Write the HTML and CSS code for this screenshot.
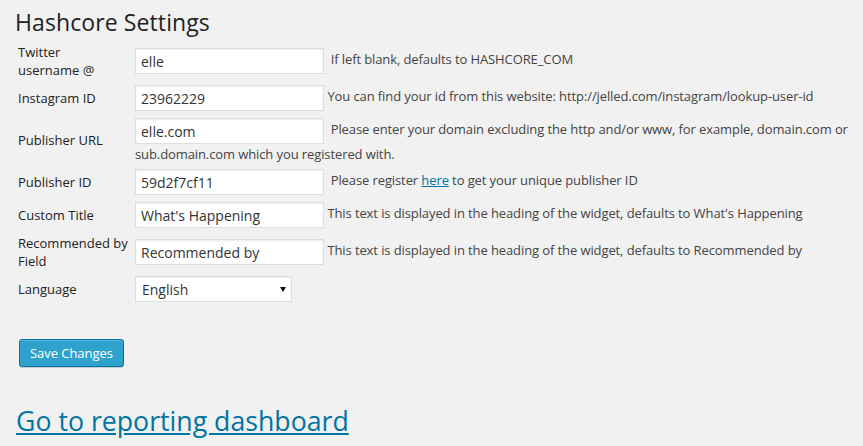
FILE: index.html
```html
<!DOCTYPE html>
<html lang="en">
<head>
<meta charset="utf-8">
<title>Hashcore Settings</title>
<link rel="stylesheet" href="styles.css">
</head>
<body>
<div class="wrap">
  <h2 class="title">Hashcore Settings</h2>
  <form class="settings">
    <div class="grid">
      <label class="lbl">Twitter username&nbsp;@</label>
      <div class="field"><input class="txt" type="text" value="elle"> <span class="desc">&nbsp;If left blank, defaults to HASHCORE_COM</span></div>

      <label class="lbl">Instagram ID</label>
      <div class="field"><input class="txt" type="text" value="23962229"> <span class="desc">You can find your id from this website: http://jelled.com/instagram/lookup-user-id</span></div>

      <label class="lbl">Publisher URL</label>
      <div class="field"><input class="txt" type="text" value="elle.com"> <span class="desc">&nbsp;Please enter your domain excluding the http and/or www, for example, domain.com or sub.domain.com which you registered with.</span></div>

      <label class="lbl">Publisher ID</label>
      <div class="field"><input class="txt" type="text" value="59d2f7cf11"> <span class="desc">&nbsp;Please register <a class="inline-link" href="#">here</a> to get your unique publisher ID</span></div>

      <label class="lbl">Custom Title</label>
      <div class="field"><input class="txt" type="text" value="What's Happening"> <span class="desc">This text is displayed in the heading of the widget, defaults to What's Happening</span></div>

      <label class="lbl">Recommended by Field</label>
      <div class="field"><input class="txt" type="text" value="Recommended by"> <span class="desc">This text is displayed in the heading of the widget, defaults to Recommended by</span></div>

      <label class="lbl">Language</label>
      <div class="field"><span class="select-wrap"><select class="sel"><option>English</option></select></span></div>
    </div>
    <button class="btn" type="button">Save Changes</button>
  </form>
  <a class="report" href="#">Go to reporting dashboard</a>
</div>
</body>
</html>
```

FILE: styles.css
```css
html, body {
  margin: 0;
  padding: 0;
}

body {
  background: #f1f1f1;
  font-family: "Open Sans", "Liberation Sans", sans-serif;
  font-size: 13px;
  line-height: 18px;
  color: #444;
}

.wrap {
  padding: 8px 10px 0 15px;
}

.title {
  margin: 0;
  font-size: 23px;
  font-weight: 400;
  line-height: 29px;
  letter-spacing: 0.1px;
  color: #222;
}

.settings {
  margin: 0;
  padding-left: 3px;
}

.grid {
  display: grid;
  grid-template-columns: 117px 1fr;
  row-gap: 5px;
  align-items: center;
  margin-top: 6px;
}

.lbl {
  color: #222;
  line-height: 18px;
}

.field {
  line-height: 18px;
}

.txt {
  box-sizing: border-box;
  width: 189px;
  height: 26px;
  margin: 1px 0;
  padding: 3px 5px;
  border: 1px solid #ddd;
  background: #fff;
  box-shadow: inset 0 1px 2px rgba(0, 0, 0, 0.07);
  font-family: "Open Sans", "Liberation Sans", sans-serif;
  font-size: 14px;
  color: #333;
  vertical-align: middle;
  outline: none;
}

.desc {
  color: #444;
  letter-spacing: -0.1px;
}

.inline-link {
  color: #0074a2;
  text-decoration: underline;
}

.select-wrap {
  position: relative;
  display: inline-block;
  vertical-align: middle;
  margin: 1px 0;
}

.select-wrap::after {
  content: "";
  position: absolute;
  right: 6px;
  top: 11px;
  width: 0;
  height: 0;
  border-style: solid;
  border-width: 5px 3.5px 0 3.5px;
  border-color: #111 transparent transparent transparent;
  pointer-events: none;
}

.sel {
  -webkit-appearance: none;
  appearance: none;
  box-sizing: border-box;
  display: block;
  width: 157px;
  height: 26px;
  margin: 0;
  padding: 0 20px 0 6px;
  border: 1px solid #ddd;
  border-radius: 0;
  background: #fff;
  box-shadow: inset 0 1px 2px rgba(0, 0, 0, 0.07);
  font-family: "Open Sans", "Liberation Sans", sans-serif;
  font-size: 14px;
  color: #333;
  outline: none;
}

.btn {
  display: block;
  box-sizing: border-box;
  height: 28px;
  margin: 36px 0 0 1px;
  padding: 0 10px 1px;
  border: 1px solid #0074a2;
  border-radius: 3px;
  background: #2ea2cc;
  box-shadow: inset 0 1px 0 rgba(120, 200, 230, 0.5), 0 1px 0 rgba(0, 0, 0, 0.15);
  font-family: "Open Sans", "Liberation Sans", sans-serif;
  font-size: 13px;
  line-height: 26px;
  letter-spacing: -0.05px;
  color: #fff;
  cursor: pointer;
}

.report {
  display: inline-block;
  margin: 36px 0 0 1px;
  font-size: 26.7px;
  line-height: 35px;
  color: #0074a2;
  text-decoration: underline;
}
```
